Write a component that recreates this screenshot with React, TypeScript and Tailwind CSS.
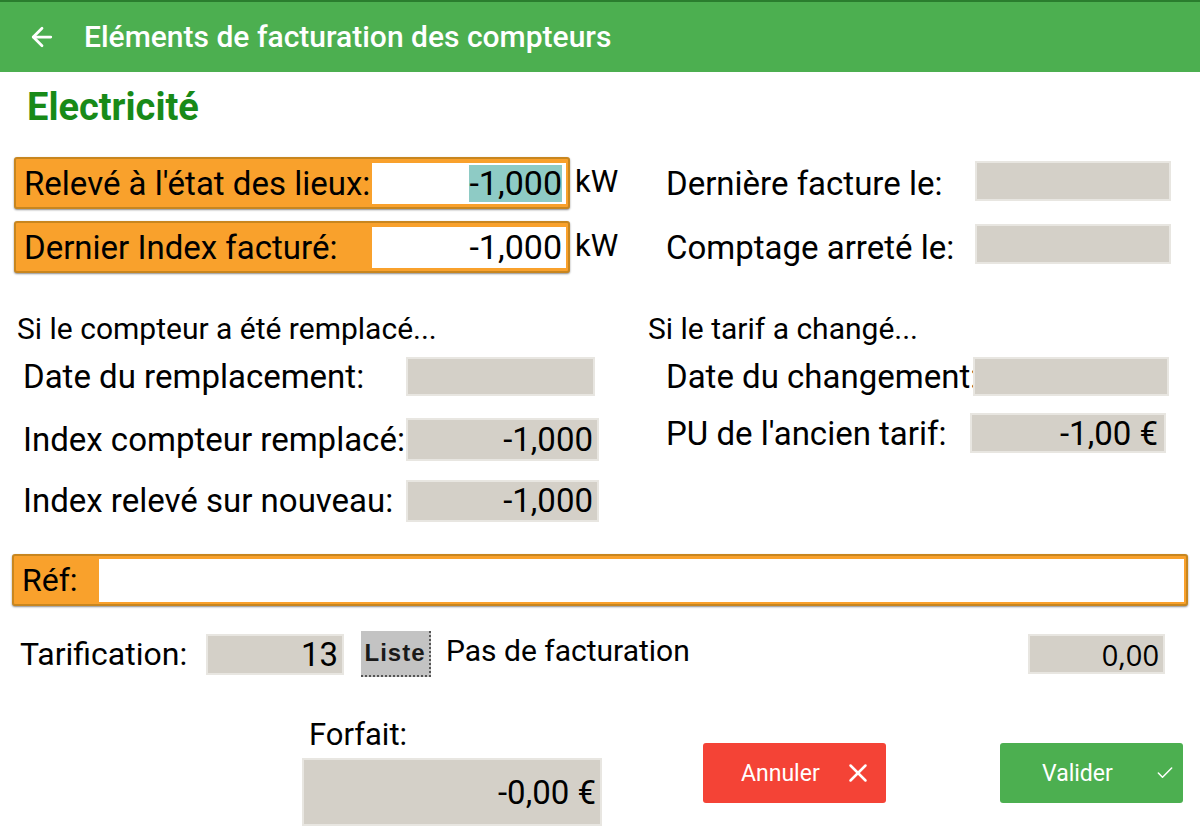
import React from "react";
import { ArrowLeft, X, Check } from "lucide-react";

const font = { fontFamily: "Roboto, 'Liberation Sans', sans-serif" };

function Gray({ w, h, value, extra = "" }: { w: string; h: string; value?: string; extra?: string }) {
  return (
    <div className={`${w} ${h} shrink-0 bg-[#d4d0c8] border-2 border-[#e8e6e1] flex items-center justify-end pr-[4px] text-[33px] leading-none text-black ${extra}`}>
      {value}
    </div>
  );
}

function OrangeRow({ label, value, highlight }: { label: string; value: string; highlight?: boolean }) {
  return (
    <div className="flex items-center">
      <div className="flex items-center w-[556px] h-[52px] bg-[#f9a12c] border-2 border-[#c8861f] rounded-[3px] shadow-[0_1px_2px_rgba(0,0,0,0.45)]">
        <div className="w-[356px] pl-[8px] text-[33px] leading-none text-black whitespace-nowrap">{label}</div>
        <div className="w-[194px] h-[41px] bg-white flex items-center justify-end pr-[4px]">
          <span className={`h-[37px] flex items-center text-[34px] leading-none text-black ${highlight ? "bg-[#8ecbc5]" : ""}`}>{value}</span>
        </div>
      </div>
      <span className="ml-[5px] text-[31px] leading-none text-black -mt-[3px]">kW</span>
    </div>
  );
}

export default function App() {
  return (
    <div className="w-[1200px] h-[837px] bg-white overflow-hidden relative" style={font}>
      {/* Header */}
      <div className="h-[72px] bg-[#4caf50] border-t-[2px] border-[#2a7d2e] flex items-center">
        <ArrowLeft className="ml-[27px] text-white" size={30} strokeWidth={2.2} />
        <span className="ml-[27px] text-white text-[30px] font-medium leading-none">Eléments de facturation des compteurs</span>
      </div>

      {/* Title */}
      <div className="h-[70px] flex items-center pl-[27px]">
        <span className="text-[38px] font-bold text-[#188a18] leading-none">Electricité</span>
      </div>

      {/* Top rows */}
      <div className="mt-[15px] flex pl-[14px]">
        <div className="w-[652px] flex flex-col gap-[12px]">
          <OrangeRow label="Relevé à l'état des lieux:" value="-1,000" highlight />
          <OrangeRow label="Dernier Index facturé:" value="-1,000" />
        </div>
        <div className="flex flex-col">
          <div className="h-[52px] flex items-center">
            <span className="w-[309px] text-[33px] leading-none text-black">Dernière facture le:</span>
            <Gray w="w-[196px]" h="h-[40px]" extra="-mt-[4px]" />
          </div>
          <div className="h-[52px] mt-[12px] flex items-center">
            <span className="w-[309px] text-[33px] leading-none text-black">Comptage arreté le:</span>
            <Gray w="w-[196px]" h="h-[40px]" extra="-mt-[6px]" />
          </div>
        </div>
      </div>

      {/* Middle section */}
      <div className="mt-[38px] flex">
        <div className="w-[648px] pl-[17px]">
          <div className="h-[36px] flex items-center text-[30px] leading-none text-black">Si le compteur a été remplacé...</div>
          <div className="pl-[6px] flex flex-col">
            <div className="h-[43px] mt-[8px] flex items-center">
              <span className="w-[383px] text-[33px] leading-none">Date du remplacement:</span>
              <Gray w="w-[189px]" h="h-[39px]" />
            </div>
            <div className="h-[43px] mt-[20px] flex items-center">
              <span className="w-[383px] text-[33px] leading-none">Index compteur remplacé:</span>
              <Gray w="w-[193px]" h="h-[43px]" value="-1,000" />
            </div>
            <div className="h-[43px] mt-[18px] flex items-center">
              <span className="w-[383px] text-[33px] leading-none">Index relevé sur nouveau:</span>
              <Gray w="w-[193px]" h="h-[42px]" value="-1,000" />
            </div>
          </div>
        </div>
        <div className="flex-1">
          <div className="h-[36px] flex items-center text-[30px] leading-none text-black">Si le tarif a changé...</div>
          <div className="pl-[18px] flex flex-col">
            <div className="h-[43px] mt-[8px] flex items-center">
              <span className="w-[309px] text-[33px] leading-none whitespace-nowrap">Date du changement:</span>
              <Gray w="w-[196px]" h="h-[39px]" extra="relative z-10 -ml-[2px]" />
            </div>
            <div className="h-[40px] mt-[15px] flex items-center">
              <span className="w-[304px] text-[33px] leading-none">PU de l'ancien tarif:</span>
              <Gray w="w-[196px]" h="h-[40px]" value="-1,00 €" extra="pr-[6px]" />
            </div>
          </div>
        </div>
      </div>

      {/* Réf */}
      <div className="mt-[32px] pl-[12px]">
        <div className="flex items-center w-[1176px] h-[52px] bg-[#f9a12c] border-2 border-[#c8861f] rounded-[3px] shadow-[0_1px_2px_rgba(0,0,0,0.45)]">
          <span className="w-[85px] pl-[8px] text-[32px] leading-none text-black">Réf:</span>
          <div className="flex-1 h-[43px] bg-white mr-[2px]" />
        </div>
      </div>

      {/* Tarification */}
      <div className="mt-[25px] flex items-center pl-[20px] h-[46px]">
        <span className="w-[186px] text-[32px] leading-none">Tarification:</span>
        <Gray w="w-[138px]" h="h-[41px]" value="13" extra="pr-[4px]" />
        <div className="ml-[17px] w-[70px] h-[46px] bg-[#c3c3c3] border-r-2 border-b-2 border-dotted border-[#555] flex items-center justify-center">
          <span className="text-[24px] font-bold text-[#1a1a1a] leading-none tracking-[1px]" style={{ fontFamily: "'Liberation Sans', sans-serif" }}>Liste</span>
        </div>
        <span className="ml-[15px] text-[30px] leading-none -mt-[6px]">Pas de facturation</span>
        <div className="ml-auto mr-[35px] w-[137px] h-[40px] bg-[#d4d0c8] border-2 border-[#e8e6e1] flex items-center justify-end pr-[4px] text-[29px] leading-none" style={{ fontFamily: "'Open Sans', sans-serif" }}>0,00</div>
      </div>

      {/* Bottom */}
      <div className="mt-[39px] flex">
        <div className="ml-[302px] w-[300px] flex flex-col">
          <span className="pl-[7px] text-[31px] leading-none h-[36px] flex items-center">Forfait:</span>
          <div className="mt-[6px] h-[68px] bg-[#d4d0c8] border-2 border-[#e8e6e1] flex items-center justify-end pr-[4px] text-[33px] leading-none">-0,00 €</div>
        </div>
        <div className="ml-[101px] mt-[27px] w-[183px] h-[60px] bg-[#f44336] rounded-[3px] flex items-center text-white">
          <span className="ml-[38px] text-[23px] leading-none">Annuler</span>
          <X className="ml-[23px]" size={30} strokeWidth={2} />
        </div>
        <div className="ml-[114px] mt-[27px] w-[183px] h-[60px] bg-[#4caf50] rounded-[3px] flex items-center text-white">
          <span className="ml-[42px] text-[23px] leading-none">Valider</span>
          <Check className="ml-[42px]" size={20} strokeWidth={1.8} />
        </div>
      </div>
    </div>
  );
}
